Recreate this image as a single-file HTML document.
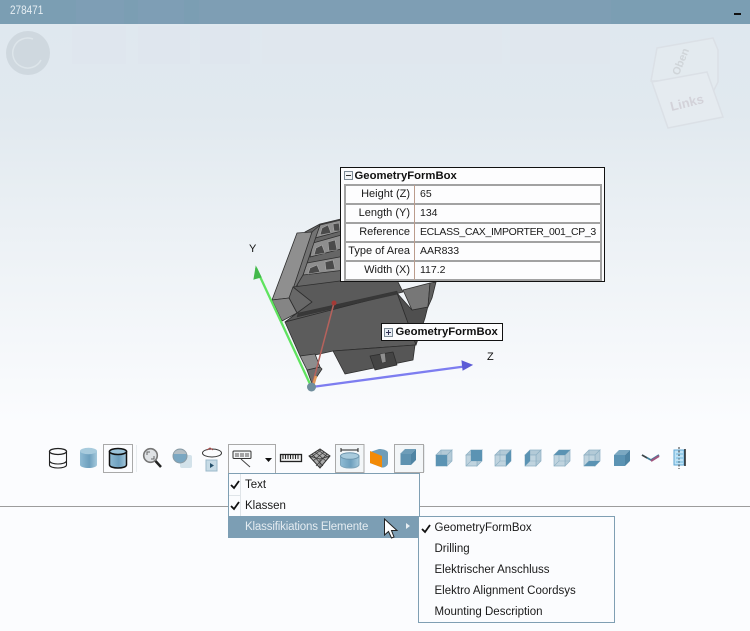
<!DOCTYPE html>
<html><head><meta charset="utf-8"><style>
html,body{margin:0;padding:0}
body{width:750px;height:631px;position:relative;overflow:hidden;background:#fbfcfe;font-family:"Liberation Sans",sans-serif;font-size:11.5px;color:#1a1a1a}
div{position:absolute;box-sizing:border-box}
.t{white-space:nowrap;line-height:14px}
.r{text-align:right}
.h{left:344px;width:257px;height:2px;background:#a2a2a2}
</style></head><body>
<div style="left:0;top:24px;width:750px;height:420px;background:linear-gradient(#dfe8ef 0,#e1e9ef 90px,#ecf1f5 210px,#fbfcfe 400px)"></div>
<div style="left:0;top:0;width:750px;height:24px;background:#7b9eb3"></div>
<div style="left:76px;top:0;width:48px;height:24px;background:#7e9eb5"></div>
<div style="left:138px;top:0;width:46px;height:24px;background:#7e9eb5"></div>
<div style="left:199px;top:0;width:412px;height:24px;background:#7e9eb4"></div>
<div class="t" style="left:10px;top:3px;color:#e6eef3;font-size:12px;transform:scaleX(.83);transform-origin:0 0">278471</div>
<div style="left:734px;top:13px;width:7px;height:2px;background:#111"></div>
<div style="left:72px;top:26px;width:54px;height:38px;background:#dfe6ee"></div>
<div style="left:138px;top:26px;width:52px;height:38px;background:#dfe6ee"></div>
<div style="left:200px;top:26px;width:50px;height:38px;background:#dfe6ee"></div>
<div style="left:262px;top:26px;width:240px;height:38px;background:#e0e7ee"></div>
<div style="left:510px;top:26px;width:100px;height:38px;background:#e0e7ee"></div>

<svg width="750" height="631" style="position:absolute;left:0;top:0">
<defs>
<linearGradient id="cyl" x1="0" x2="1" y1="0" y2="0"><stop offset="0" stop-color="#8fbbd4"/><stop offset=".55" stop-color="#6d9fbd"/><stop offset="1" stop-color="#a5c9dc"/></linearGradient>
<g id="cube"><path d="M0 5 5 0H16L11 5Z" fill="#b3cad7" stroke="#8eb0c3" stroke-width=".7"/><path d="M11 5 16 0V11L11 16Z" fill="#b3cad7" stroke="#8eb0c3" stroke-width=".7"/><path d="M0 5H11V16H0Z" fill="#c0d4df" stroke="#8eb0c3" stroke-width=".7"/><path d="M5 0V11H16M5 11 0 16" fill="none" stroke="#8eb0c3" stroke-width=".6"/></g>
</defs>
<!-- top-left circle -->
<circle cx="28" cy="53" r="22" fill="#cfd8df"/><path d="M33 39A15 15 0 1 0 41 60" fill="none" stroke="#dde5ea" stroke-width="1.500"/>
<!-- view cube -->
<g fill="#e3eaef" stroke="#dbe0e6" stroke-width="1.500">
<path d="M657 48 713 38 718 50 718 82 700 118 685 80 651 81Z"/>
<path d="M652 82 707 72 723 117 668 128Z" fill="#e5ebf0"/>
</g>
<text x="688" y="107" transform="rotate(-14 688 107)" font-family="Liberation Sans" font-size="13" font-weight="700" fill="#d3d2d9" text-anchor="middle">Links</text>
<text x="684" y="63" transform="rotate(-68 684 63)" font-family="Liberation Sans" font-size="11" font-weight="700" fill="#d0d5d9" text-anchor="middle">Oben</text>

<!-- 3D model -->
<g stroke="#2d2d2d" stroke-width=".8" stroke-linejoin="round">
<path d="M305 232 320 224 345 218 345 290 305 296 297 285Z" fill="#666"/>
<g fill="#8e8e8e"><path d="M320 225 345 219V230L315 238Z"/><path d="M313 243 345 234V248L310 257Z"/><path d="M307 263 345 256V270L303 275Z"/></g>
<g fill="#4a4a4a" stroke="#aaa" stroke-width=".6"><path d="M322 228 328 225 331 233 320 235Z"/><path d="M333 224 339 223 340 231 334 231Z"/><path d="M316 248 322 245 325 253 314 255Z"/><path d="M328 242 335 240 337 250 329 251Z"/><path d="M310 268 317 265 320 272 308 274Z"/><path d="M325 262 333 260 335 269 326 270Z"/></g>
<path d="M312 232 320 225 303 275 297 285 290 300 278 300Z" fill="#737373"/>
<path d="M297 233 312 232 290 298 272 300Z" fill="#8f8f8f"/>
<path d="M293 287 340 281 397 280 403 292 285 322 297 313Z" fill="#5a5a5a"/>
<path d="M289 298 293 287 312 302 297 313Z" fill="#686868"/>
<path d="M272 300 289 298 297 313 282 321Z" fill="#858585"/>
<path d="M397 293 412 310 428 307 432 290 425 318 416 345Z" fill="#4f4f4f"/>
<path d="M285 322 397 293 416 345 333 351 315 355 300 356Z" fill="#5c5c5c"/>
<path d="M298 313 397 291 398 294 297 317Z" fill="#383838" stroke-width=".3"/>
<path d="M333 351 415 345 413 360 345 374Z" fill="#565656"/>
<path d="M370 356 393 352 397 365 375 370Z" fill="#444"/>
<path d="M380 354 385 353 386 362 382 363Z" fill="#8f8f8f" stroke-width=".4"/>
<path d="M307 370 320 367 322 369 312 384Z" fill="#6d6d6d"/>
<path d="M300 356 315 354 320 367 307 370Z" fill="#8d8d8d"/>
<path d="M403 290 430 283 428 307 412 310Z" fill="#777"/>
<path d="M430 283 436 282 432 298 428 307Z" fill="#5f5f5f"/>
</g>
<!-- axes -->
<g fill="none">
<path d="M312 386 334 303" stroke="#b5625c" stroke-width="1.500"/>
<circle cx="334" cy="303" r="2.500" fill="#a33a36"/>
<path d="M310 384 256 268" stroke="#5fe35f" stroke-width="2.300"/>
<path d="M256 267 261 277 254 279Z" fill="#43b84b" stroke="#43b84b"/>
<path d="M312 387 468 366" stroke="#7d7df0" stroke-width="2.300"/>
<path d="M472 365 462 361 463 370Z" fill="#5c5cd6" stroke="#5c5cd6"/>
<path d="M313 386 316 376" stroke="#e39a5b" stroke-width="2.500"/>
</g>
<circle cx="311.500" cy="387" r="4.500" fill="#6f8d9c"/>
<text x="249" y="252" font-family="Liberation Sans" font-size="11" fill="#111">Y</text>
<text x="487" y="360" font-family="Liberation Sans" font-size="11" fill="#111">Z</text>

<!-- toolbar -->
<rect x="103.500" y="444.500" width="29" height="28" fill="none" stroke="#a9a9a9"/>
<rect x="335.500" y="444.500" width="28.500" height="28" fill="#f3f6f8" stroke="#a9a9a9"/>
<rect x="394.500" y="444.500" width="29" height="28" fill="#f3f6f8" stroke="#a9a9a9"/>
<rect x="228.500" y="444.500" width="47" height="29" fill="#fbfcfe" stroke="#a9a9a9"/>
<g fill="none" stroke="#222" stroke-width="1.300"><ellipse cx="58" cy="451.500" rx="8.500" ry="3"/><path d="M49.500 451.500V465C50 469 66 469 66.500 465V451.500M49.500 461C51 465 65 465 66.500 461" stroke-width="1.100"/></g>
<path d="M80 451V465C81 469 96 469 97 465V451Z" fill="url(#cyl)"/><ellipse cx="88.500" cy="451" rx="8.500" ry="3.200" fill="#a8cbdd"/>
<path d="M109.500 451.500V465C110 469 126 469 126.500 465V451.500Z" fill="url(#cyl)" stroke="#111" stroke-width="1.500"/><ellipse cx="118" cy="451.500" rx="8.500" ry="3" fill="#9bc3d9" stroke="#111" stroke-width="1.500"/>
<!-- magnifier -->
<circle cx="150.500" cy="455.500" r="6.800" fill="#dfe2e5" stroke="#777" stroke-width="1.600"/><path d="M155.500 461 161 467" stroke="#222" stroke-width="2.500"/><path d="M147 455V452H150M154 456V459H151" fill="none" stroke="#666" stroke-width="1"/>
<!-- overlap -->
<rect x="180" y="455" width="12" height="13" rx="2" fill="#d3e2ea"/><circle cx="180" cy="456" r="7" fill="#7aa7c2" stroke="#8a9aa3"/><path d="M173.500 454A7 7 0 0 1 186.500 454Z" fill="#b4bec4"/>
<!-- rotate -->
<ellipse cx="212" cy="453" rx="9.500" ry="4" fill="none" stroke="#333" stroke-width="1"/><path d="M207 450 210 448 213 450" fill="none" stroke="#a44" stroke-width="1"/><rect x="206" y="460" width="11" height="11" fill="#c7dbe6" stroke="#9bb9ca"/><path d="M210 463V468L214 465.500Z" fill="#25506b"/>
<!-- dropdown icon -->
<rect x="233" y="451" width="18" height="7.500" rx="1" fill="#f2f4f5" stroke="#333"/><path d="M235 454H239M240 454H244M245 454H249M235 456H239M240 456H244M245 456H249" stroke="#555"/><path d="M241 459 250 467" stroke="#444" stroke-width="1"/><path d="M265 458H272L268.500 462Z" fill="#111"/>
<!-- ruler -->
<rect x="280.500" y="454.500" width="21" height="7" fill="#eee" stroke="#222" stroke-width="1.300"/><path d="M283 455V459M285.500 455V459M288 455V459M290.500 455V459M293 455V459M295.500 455V459M298 455V459" stroke="#222"/>
<!-- mesh -->
<path d="M309 456 320 449 330 456 320 468Z" fill="#aaa" stroke="#333"/><path d="M312 454 323 466M315 452 326 461M318 450 329 458M327 454 316 466M324 452 313 461M321 450 310 458M309 456 320 459 330 456M320 459V468" stroke="#333" stroke-width=".7" fill="none"/>
<!-- height cyl -->
<path d="M341 450H358M341 448V452M358 448V452" stroke="#222" fill="none"/><path d="M340.500 456V465C342 469 357 469 359 465V456Z" fill="url(#cyl)" stroke="#7fa6bc"/><ellipse cx="349.750" cy="456" rx="9.200" ry="3.300" fill="#a9cbdd" stroke="#6d95ad"/>
<!-- orange -->
<path d="M370 452 379 449C385 449 388 451 388 453V463C388 466 384 468 382 467.500L370 463Z" fill="#6f9db8"/><path d="M370 451 382 456V467.500L370 463Z" fill="#f28a06"/>
<!-- solid cube -->
<path d="M400 454 405 449H416L411 454Z" fill="#6e9db8"/><path d="M411 454 416 449V460L411 465Z" fill="#4e84a3"/><path d="M400.500 454H411V465H400.500Z" fill="#5e92b0"/>
<!-- view cubes -->
<use href="#cube" x="436" y="450"/><rect x="436" y="455" width="11" height="11" fill="#5b93b3"/>
<use href="#cube" x="466" y="450"/><rect x="471" y="450" width="11" height="11" fill="#5b93b3"/>
<use href="#cube" x="495" y="450"/><path d="M506 455 511 450V461L506 466Z" fill="#5b93b3"/>
<use href="#cube" x="525" y="450"/><path d="M525 455 530 450V461L525 466Z" fill="#5b93b3"/>
<use href="#cube" x="554" y="450"/><path d="M554 455 559 450H570L565 455Z" fill="#5b93b3"/>
<use href="#cube" x="584" y="450"/><path d="M584 466 589 461H600L595 466Z" fill="#5b93b3"/>
<path d="M614 455 619 450H630L625 455Z" fill="#7ba8c1"/><path d="M625 455 630 450V461L625 466Z" fill="#4e84a3"/><path d="M614 455H625V466H614Z" fill="#5b93b3"/>
<!-- glasses -->
<path d="M642 455 651 460 659 455" fill="none" stroke="#3f7f9a" stroke-width="1.800"/><path d="M651 461 659 456" stroke="#a0567f" stroke-width="2.200"/><path d="M642 455 647 458" stroke="#444" stroke-width="1.600"/>
<!-- book -->
<rect x="674" y="450" width="10" height="15" fill="#bfe2f5" stroke="#5ea6d3"/><path d="M685 449V466" stroke="#222" stroke-width="1.500"/><path d="M679 447V469" stroke="#333" stroke-dasharray="2 1.500"/><path d="M676 454H683M676 458H683M676 462H683" stroke="#6db5dc"/>
<!-- separators -->
<path d="M136.500 445V472M424.500 445V472" stroke="#e7ebee"/>
<path d="M0 506.500H228M419 506.500H750" stroke="#9c9c9c"/>
</svg>

<!-- property box -->
<div style="left:340px;top:167px;width:265px;height:115px;background:#fdfdfe;border:1px solid #111"></div>
<div style="left:344px;top:171px;width:9px;height:9px;border:1px solid #7d8b96;background:#f3f5f7"></div>
<div style="left:346px;top:175px;width:5px;height:1px;background:#333"></div>
<div class="t" style="left:354.500px;top:169px;font-weight:700;font-size:11.300px;color:#111">GeometryFormBox</div>
<div class="h" style="top:184px"></div>
<div class="h" style="top:203px"></div>
<div class="h" style="top:222px"></div>
<div class="h" style="top:241px"></div>
<div class="h" style="top:260px"></div>
<div class="h" style="top:279px"></div>
<div style="left:344px;top:184px;width:2px;height:97px;background:#a2a2a2"></div>
<div style="left:600px;top:184px;width:2px;height:97px;background:#a2a2a2"></div>
<div style="left:414px;top:185px;width:1px;height:95px;background:#bb9c8c"></div>
<div class="t r" style="left:345px;width:65px;top:187px;font-size:11px">Height (Z)</div><div class="t" style="left:420px;top:187px;font-size:10.500px">65</div>
<div class="t r" style="left:345px;width:65px;top:206px;font-size:11px">Length (Y)</div><div class="t" style="left:420px;top:206px;font-size:10.500px">134</div>
<div class="t r" style="left:345px;width:65px;top:225px;font-size:11px">Reference</div><div class="t" style="left:420px;top:225px;font-size:10.500px;letter-spacing:-.34px">ECLASS_CAX_IMPORTER_001_CP_3</div>
<div class="t r" style="left:345px;width:65px;top:244px;font-size:11px">Type of Area</div><div class="t" style="left:420px;top:244px;font-size:10.500px">AAR833</div>
<div class="t r" style="left:345px;width:65px;top:263px;font-size:11px">Width (X)</div><div class="t" style="left:420px;top:263px;font-size:10.500px">117.2</div>

<!-- second label -->
<div style="left:381px;top:323px;width:122px;height:18px;background:#fdfdfe;border:1px solid #111"></div>
<div style="left:384px;top:328px;width:9px;height:9px;border:1px solid #7d8b96;background:#e8edf3"></div>
<div style="left:386px;top:332px;width:5px;height:1px;background:#335"></div>
<div style="left:388px;top:330px;width:1px;height:5px;background:#335"></div>
<div class="t" style="left:395.500px;top:325px;font-weight:700;font-size:11.300px;color:#111">GeometryFormBox</div>

<!-- main menu -->
<div style="left:228px;top:473px;width:192px;height:65px;background:#fbfcfe;border:1px solid #7f9fb3"></div>
<div style="left:240px;top:474px;width:1px;height:42px;background:#dfe4e8"></div>
<div style="left:229px;top:495px;width:11px;height:1px;background:#dfe4e8"></div>
<div style="left:228px;top:516px;width:192px;height:22px;background:#7c9eb4"></div>
<div class="t" style="left:245px;top:478px">Text</div>
<div class="t" style="left:245px;top:499px">Klassen</div>
<div class="t" style="left:245px;top:520px;color:#e4ecf1;letter-spacing:-.16px">Klassifikiations Elemente</div>
<div style="left:406px;top:523px;width:0;height:0;border-left:4px solid #e8eef2;border-top:3.500px solid transparent;border-bottom:3.500px solid transparent"></div>
<svg width="16" height="12" viewBox="0 0 16 12" style="position:absolute;left:230px;top:479px"><path d="M1 6 4 9 9 2" fill="none" stroke="#111" stroke-width="1.800"/></svg>
<svg width="16" height="12" viewBox="0 0 16 12" style="position:absolute;left:230px;top:500px"><path d="M1 6 4 9 9 2" fill="none" stroke="#111" stroke-width="1.800"/></svg>

<!-- submenu -->
<div style="left:418px;top:516px;width:197px;height:107px;background:#fbfcfe;border:1px solid #7f9fb3"></div>
<svg width="16" height="12" viewBox="0 0 16 12" style="position:absolute;left:421px;top:523px"><path d="M1 6 4 9 9 2" fill="none" stroke="#111" stroke-width="1.800"/></svg>
<div class="t" style="left:434.500px;top:521px">GeometryFormBox</div>
<div class="t" style="left:434.500px;top:542px">Drilling</div>
<div class="t" style="left:434.500px;top:563px">Elektrischer Anschluss</div>
<div class="t" style="left:434.500px;top:584px">Elektro Alignment Coordsys</div>
<div class="t" style="left:434.500px;top:605px">Mounting Description</div>

<!-- cursor -->
<svg width="16" height="22" viewBox="0 0 16 22" style="position:absolute;left:383px;top:518px"><path d="M1.500 1V17L5.500 13.500 8.500 20 11 19 8.500 12.500H14Z" fill="#fff" stroke="#222" stroke-width="1"/></svg>
</body></html>
